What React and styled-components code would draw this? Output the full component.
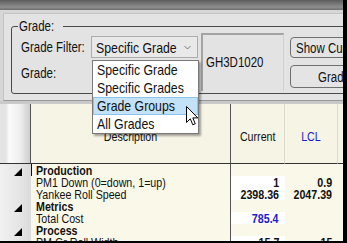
import React from "react";
import styled, { createGlobalStyle } from "styled-components";

const FONT = `"Liberation Sans", Arial, sans-serif`;

const COLORS = {
  panel: "#e3e3e3",
  cream: "#faf8e9",
  headerCream: "#f6f4e4",
  line: "#4a4a4a",
  blue: "#1c1cc8",
};

const GlobalStyle = createGlobalStyle`
  body {
    margin: 0;
    font-family: ${FONT};
    color: #111;
  }
`;

const ROWS = [
  { label: "Production", group: true, focus: true },
  { label: "PM1 Down (0=down, 1=up)", current: "1", lcl: "0.9" },
  { label: "Yankee Roll Speed", current: "2398.36", lcl: "2047.39" },
  { label: "Metrics", group: true },
  { label: "Total Cost", current: "785.4", lcl: "", blue: true },
  { label: "Process", group: true },
  { label: "PM Gr Roll Width", current: "15.7", lcl: "15" },
];

const OPTIONS = ["Specific Grade", "Specific Grades", "Grade Groups", "All Grades"];

// the old app draws a condensed system font; squeeze Liberation Sans to match
const Narrow = ({ origin = "left", children }) => (
  <Squeeze $origin={origin}>{children}</Squeeze>
);

const App = () => {
  return (
    <>
      <GlobalStyle />
      <Frame>
        <TitleBar />
        <Panel>
          <GroupBox>
            <Legend>
              <Narrow>Grade:</Narrow>
            </Legend>
            <GroupContent>
              <LabelColumn>
                <FieldLabel $top={6}>
                  <Narrow>Grade Filter:</Narrow>
                </FieldLabel>
                <FieldLabel $top={10}>
                  <Narrow>Grade:</Narrow>
                </FieldLabel>
              </LabelColumn>
              <Select>
                <Narrow>Specific Grade</Narrow>
                <svg width="7" height="5" viewBox="0 0 7 5">
                  <polyline points="0.5,1 3.5,4 6.5,1" fill="none" stroke="#777" strokeWidth="1" />
                </svg>
              </Select>
              <GradeBox>
                <Narrow>GH3D1020</Narrow>
              </GradeBox>
              <ButtonColumn>
                <Button $top={4} $height={21} $indent={5}>
                  <Narrow>Show Current Grade</Narrow>
                </Button>
                <Button $top={7} $height={23} $indent={27}>
                  <Narrow>Grade Groups</Narrow>
                </Button>
              </ButtonColumn>
            </GroupContent>
          </GroupBox>
        </Panel>
        <Band />
        <Grid>
          <Corner />
          <HeaderCell $divider="dark">
            <Narrow origin="center">Description</Narrow>
          </HeaderCell>
          <HeaderCell $divider="light">
            <Narrow origin="center">Current</Narrow>
          </HeaderCell>
          <HeaderCell $divider="light" $color={COLORS.blue}>
            <Narrow origin="center">LCL</Narrow>
          </HeaderCell>
          <HeaderCell />
          {ROWS.map((row) => (
            <React.Fragment key={row.label}>
              <RowHead $group={row.group} />
              <DescCell $group={row.group} $focus={row.focus}>
                <Narrow>{row.label}</Narrow>
              </DescCell>
              <ValueCell $white={!row.group} $color={row.blue ? COLORS.blue : undefined}>
                <Narrow origin="right">{row.current}</Narrow>
              </ValueCell>
              <ValueCell>
                <Narrow origin="right">{row.lcl}</Narrow>
              </ValueCell>
              <ValueCell />
            </React.Fragment>
          ))}
        </Grid>

        <DropList>
          {OPTIONS.map((opt) => (
            <Option key={opt} $active={opt === "Grade Groups"}>
              <Narrow>{opt}</Narrow>
            </Option>
          ))}
        </DropList>
        <Pointer width="13" height="21" viewBox="0 0 13 21">
          <path
            d="M0.5 0.5 L0.5 16.5 L4.3 12.8 L6.8 18.8 L9.3 17.8 L6.8 11.9 L11.8 11.9 Z"
            fill="#fff"
            stroke="#000"
            strokeWidth="1"
            strokeLinejoin="round"
          />
        </Pointer>
      </Frame>
    </>
  );
};

const Squeeze = styled.span`
  display: inline-block;
  white-space: nowrap;
  transform: scaleX(0.82);
  transform-origin: ${(p) => p.$origin} center;
`;

const Frame = styled.div`
  position: relative;
  width: 347px;
  height: 243px;
  box-sizing: border-box;
  border-right: 4px solid #000;
  border-bottom: 2px solid #000;
  overflow: hidden;
  display: flex;
  flex-direction: column;
  background: #d6d6d6;
`;

const TitleBar = styled.div`
  height: 10px;
  flex-shrink: 0;
  background: linear-gradient(#5c5c5c, #8e8e8e 70%, #6e6e6e);
`;

const Panel = styled.div`
  flex-shrink: 0;
  height: 86px;
  margin: 3px 0 0 3px;
  border-top: 1px solid #c4c4c4;
  border-left: 1px solid #c4c4c4;
  border-bottom: 1px solid #999;
  background: ${COLORS.panel};
  overflow: hidden;
`;

const GroupBox = styled.fieldset`
  margin: 5px 0 0 7px;
  padding: 0;
  width: 420px;
  height: 75px;
  box-sizing: border-box;
  border: 1px solid ${COLORS.line};
  border-radius: 3px;
`;

const Legend = styled.legend`
  margin-left: 6px;
  padding: 0 1px;
  font-size: 14px;
  line-height: 14px;
`;

const GroupContent = styled.div`
  display: flex;
  align-items: flex-start;
  padding-left: 9px;
`;

const LabelColumn = styled.div`
  width: 70px;
  display: flex;
  flex-direction: column;
`;

const FieldLabel = styled.div`
  margin-top: ${(p) => p.$top}px;
  font-size: 14px;
  line-height: 16px;
`;

const Select = styled.div`
  margin-top: 3px;
  width: 107px;
  height: 22px;
  box-sizing: border-box;
  padding: 0 6px 0 4px;
  display: flex;
  align-items: center;
  border: 1px solid #acacac;
  background: #e9e9e9;
  font-size: 15px;

  & > span {
    flex: 1;
    min-width: 0;
  }
`;

const GradeBox = styled.div`
  margin-left: 3px;
  width: 83px;
  height: 58px;
  box-sizing: border-box;
  padding: 19px 0 0 3px;
  border-top: 2px solid #a3a3a3;
  border-left: 2px solid #a3a3a3;
  border-right: 1px solid #d0d0d0;
  background: ${COLORS.panel};
  font-size: 14px;
  line-height: 16px;
`;

const ButtonColumn = styled.div`
  display: flex;
  flex-direction: column;
  margin-left: 6px;
`;

const Button = styled.div`
  margin-top: ${(p) => p.$top}px;
  width: 128px;
  height: ${(p) => p.$height}px;
  box-sizing: border-box;
  padding-left: ${(p) => p.$indent}px;
  border: 1px solid #6f6f6f;
  border-radius: 4px;
  background: #e4e4e4;
  font-size: 14px;
  display: flex;
  align-items: center;
  overflow: hidden;
`;

const Band = styled.div`
  height: 3px;
  flex-shrink: 0;
  background: #c9c9c9;
`;

const Grid = styled.div`
  flex: 1;
  display: grid;
  grid-template-columns: 31px 200px 54px 53px 1fr;
  grid-template-rows: 60px;
  grid-auto-rows: 12px;
  background: ${COLORS.cream};
  font-size: 13px;
`;

const Corner = styled.div`
  border-right: 1px solid #555;
  border-bottom: 1px solid #333;
  background: linear-gradient(
    to right,
    #e4e4e4 0,
    #e4e4e4 6px,
    #fbfbfb 9px,
    #efefef 20px,
    #cdcdcd 30px
  );
`;

const HeaderCell = styled.div`
  display: flex;
  align-items: center;
  justify-content: center;
  padding-top: 5px;
  box-sizing: border-box;
  background: ${COLORS.headerCream};
  border-bottom: 1px solid #333;
  border-right: ${(p) =>
    p.$divider === "dark"
      ? "1px solid #555"
      : p.$divider === "light"
      ? "1px solid #dcdacb"
      : "none"};
  color: ${(p) => p.$color || "#111"};
`;

const RowHead = styled.div`
  position: relative;
  background: linear-gradient(to right, #f1f1f1, #e4e4e4 70%, #dadada);

  &::after {
    content: "";
    display: ${(p) => (p.$group ? "block" : "none")};
    position: absolute;
    left: 13px;
    top: 4px;
    border-left: 9px solid transparent;
    border-bottom: 9px solid #000;
  }
`;

const DescCell = styled.div`
  padding-left: 4px;
  line-height: 13px;
  border-right: 1px solid #555;
  border-left: 1px solid ${(p) => (p.$focus ? "#111" : "transparent")};
  font-weight: ${(p) => (p.$group ? 700 : 400)};
`;

const ValueCell = styled.div`
  padding-right: 6px;
  text-align: right;
  line-height: 13px;
  font-weight: 700;
  background: ${(p) => (p.$white ? "#fff" : COLORS.cream)};
  color: ${(p) => p.$color || "#111"};
`;

const DropList = styled.div`
  position: absolute;
  left: 92px;
  top: 60px;
  width: 107px;
  box-sizing: border-box;
  border: 1px solid #7a7a7a;
  background: #fff;
  box-shadow: 2px 2px 2px rgba(0, 0, 0, 0.35);
  font-size: 15px;
`;

const Option = styled.div`
  height: 18px;
  line-height: 16px;
  box-sizing: border-box;
  padding-left: 3px;
  border: 1px solid ${(p) => (p.$active ? "#8cc3ec" : "transparent")};
  background: ${(p) => (p.$active ? "#c3e1f7" : "transparent")};
`;

const Pointer = styled.svg`
  position: absolute;
  left: 186px;
  top: 106px;
`;

export default App;
